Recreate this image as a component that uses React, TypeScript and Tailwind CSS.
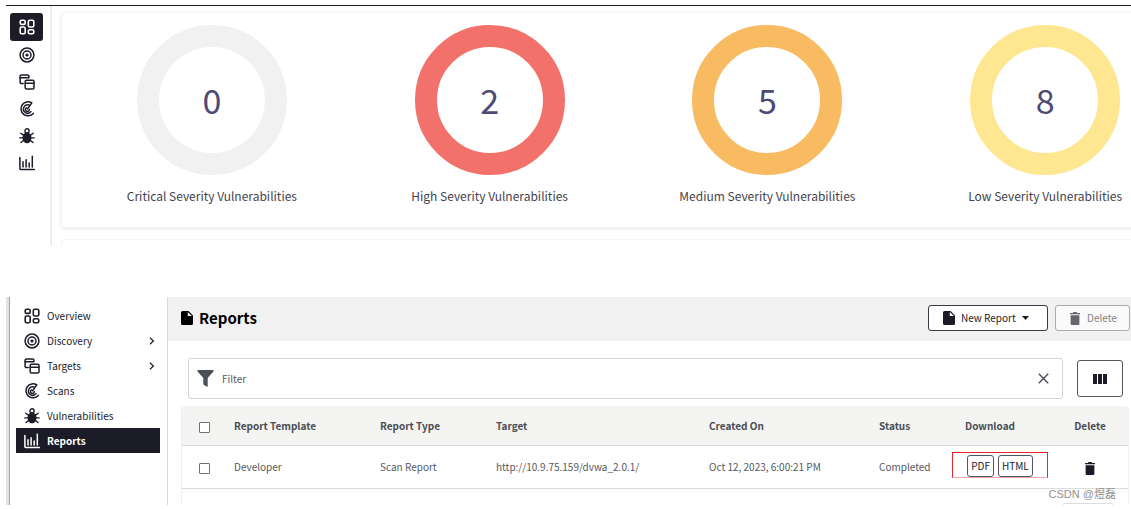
import type { ReactNode } from "react";

type IconProps = { className?: string };

function OverviewIcon({ className }: IconProps) {
  return (
    <svg viewBox="0 0 16 16" fill="none" stroke="currentColor" strokeWidth="1.6" className={className} aria-hidden="true">
      <rect x="1.2" y="1.2" width="5" height="4.2" rx="1.5" />
      <rect x="9.3" y="1.2" width="5.5" height="6.8" rx="1.5" />
      <rect x="1.2" y="8" width="5" height="6.8" rx="1.5" />
      <rect x="9.3" y="10.8" width="5.5" height="4" rx="1.5" />
    </svg>
  );
}

function DiscoveryIcon({ className }: IconProps) {
  return (
    <svg viewBox="0 0 16 16" fill="none" stroke="currentColor" strokeWidth="1.5" className={className} aria-hidden="true">
      <circle cx="8" cy="8" r="6.9" />
      <circle cx="8" cy="8" r="4" />
      <circle cx="8" cy="8" r="1.6" fill="currentColor" stroke="none" />
    </svg>
  );
}

function TargetsIcon({ className }: IconProps) {
  return (
    <svg viewBox="0 0 16 16" fill="none" stroke="currentColor" strokeWidth="1.5" strokeLinecap="round" className={className} aria-hidden="true">
      <path d="M4.2 9.6H2.4A1.3 1.3 0 0 1 1.1 8.3V2.3A1.3 1.3 0 0 1 2.4 1H8.6A1.3 1.3 0 0 1 9.9 2.3V3.6" />
      <path d="M1.1 3.8H9.6" />
      <rect x="6.2" y="6.3" width="8.8" height="8.7" rx="1.3" />
      <path d="M6.2 9.3H15" />
    </svg>
  );
}

function ScansIcon({ className }: IconProps) {
  return (
    <svg viewBox="0 0 16 16" fill="none" stroke="currentColor" strokeWidth="1.5" strokeLinecap="round" strokeLinejoin="round" className={className} aria-hidden="true">
      <path d="M14.3 12.4A7 7 0 1 1 12.8 1.9L8.6 7.8" />
      <path d="M12 10.6A4.2 4.2 0 1 1 10 4" />
      <path d="M10.3 8.4A1.9 1.9 0 1 1 7.6 6.9" />
    </svg>
  );
}

function BugIcon({ className }: IconProps) {
  return (
    <svg viewBox="0 0 16 16" fill="none" stroke="currentColor" strokeWidth="1.4" strokeLinecap="round" className={className} aria-hidden="true">
      <circle cx="8" cy="2.9" r="2.1" />
      <ellipse cx="8" cy="9.8" rx="4.5" ry="5.5" fill="currentColor" stroke="none" />
      <path d="M4.8 7.4 1.8 5.2M4.2 9.9H.8M4.8 12.2 2 14.5M11.2 7.4 14.2 5.2M11.8 9.9H15.2M11.2 12.2 14 14.5" />
    </svg>
  );
}

function ReportsIcon({ className }: IconProps) {
  return (
    <svg viewBox="0 0 16 16" fill="none" stroke="currentColor" strokeWidth="1.5" strokeLinecap="round" className={className} aria-hidden="true">
      <path d="M.9 2.5V13.4A1.2 1.2 0 0 0 2.1 14.6H15.3" />
      <path d="M4 6.8V12M7.1 4.8V12M10.2 8V12M13.3 1.2V12" />
    </svg>
  );
}

function FileIcon({ className }: IconProps) {
  return (
    <svg viewBox="0 0 12 14" fill="currentColor" className={className} aria-hidden="true">
      <path fillRule="evenodd" d="M1.5 0H7.6L12 4.4V12.5A1.5 1.5 0 0 1 10.5 14H1.5A1.5 1.5 0 0 1 0 12.5V1.5A1.5 1.5 0 0 1 1.5 0ZM6.8 1.1V5.1H10.9Z" />
    </svg>
  );
}

function TrashIcon({ className }: IconProps) {
  return (
    <svg viewBox="0 0 10 13" fill="currentColor" className={className} aria-hidden="true">
      <path d="M0 .9H2.8L3.5 0H6.5L7.2.9H10V2.3H0ZM.6 3.3H9.4V11.8A1.2 1.2 0 0 1 8.2 13H1.8A1.2 1.2 0 0 1 .6 11.8Z" />
    </svg>
  );
}

function FilterIcon({ className }: IconProps) {
  return (
    <svg viewBox="0 0 17 17" fill="currentColor" className={className} aria-hidden="true">
      <path d="M.7 0H16.3Q17 .8 16.4 1.5L10.7 8V16.4Q10.4 17 9.8 16.8L6.8 14.8Q6.3 14.4 6.3 13.9V8L.6 1.5Q0 .8.7 0Z" />
    </svg>
  );
}

function ChevronIcon({ className }: IconProps) {
  return (
    <svg viewBox="0 0 6 8" fill="none" stroke="currentColor" strokeWidth="1.2" className={className} aria-hidden="true">
      <path d="M1 .8 4.4 4 1 7.2" />
    </svg>
  );
}

const menu = [
  { label: "Overview", Icon: OverviewIcon, expandable: false },
  { label: "Discovery", Icon: DiscoveryIcon, expandable: true },
  { label: "Targets", Icon: TargetsIcon, expandable: true },
  { label: "Scans", Icon: ScansIcon, expandable: false },
  { label: "Vulnerabilities", Icon: BugIcon, expandable: false },
  { label: "Reports", Icon: ReportsIcon, expandable: false },
];

const severities = [
  { label: "Critical Severity Vulnerabilities", count: 0, ring: "border-[#f1f1f1]" },
  { label: "High Severity Vulnerabilities", count: 2, ring: "border-[#f2726b]" },
  { label: "Medium Severity Vulnerabilities", count: 5, ring: "border-[#f8bb62]" },
  { label: "Low Severity Vulnerabilities", count: 8, ring: "border-[#ffe690]" },
];

function Dashboard() {
  return (
    <section className="flex h-[241px] overflow-hidden border-t border-[#1c1b26]">
      <nav aria-label="Compact" className="flex w-[46px] shrink-0 flex-col items-start border-r-2 border-[#efefef] pt-[7px] pl-1">
        {menu.map(({ label, Icon }, i) => (
          <a
            key={label}
            href="#"
            aria-label={label}
            className={
              i === 0
                ? "flex h-7 w-[33px] items-center justify-center rounded-[3px] bg-[#1c1b28] text-white"
                : "flex h-[27px] w-[33px] items-center justify-center text-[#1c1b28]"
            }
          >
            <Icon className="size-4" />
          </a>
        ))}
      </nav>
      <div className="min-w-0 grow pt-[6px] pl-[9px]">
        <div className="-mr-[66px] grid h-[216px] grid-cols-4 rounded border border-[#f5f5f5] pt-3 pr-3 pl-[11px] shadow-[0_1px_3px_rgba(0,0,0,0.1)]">
          {severities.map(({ label, count, ring }) => (
            <div key={label} className="flex flex-col items-center">
              <div className={`flex size-[150px] items-center justify-center rounded-full border-[22px] text-[34px] leading-none text-[#4c4b75] ${ring}`}>
                {count}
              </div>
              <p className="mt-3 text-[12px] leading-[18px] whitespace-nowrap text-[#44434d]">{label}</p>
            </div>
          ))}
        </div>
        <div className="mt-[11px] -mr-[66px] h-10 rounded border border-[#f5f5f5]" />
      </div>
    </section>
  );
}

function SideMenu() {
  return (
    <nav aria-label="Main" className="w-[158px] shrink-0 border-r border-[#d9d9d9] pt-[6px] pr-[7px] pl-[6px]">
      {menu.map(({ label, Icon, expandable }) => (
        <a
          key={label}
          href="#"
          className={
            label === "Reports"
              ? "flex h-[25px] items-center bg-[#1c1b28] pr-1 pl-2 font-bold text-white"
              : "flex h-[25px] items-center pr-1 pl-2 text-[#1c1b28]"
          }
        >
          <Icon className="size-4" />
          <span className="ml-[7px] grow">{label}</span>
          {expandable && <ChevronIcon className="mr-[1px] h-2 w-[6px]" />}
        </a>
      ))}
    </nav>
  );
}

function Check({ label }: { label: string }) {
  return (
    <input
      type="checkbox"
      aria-label={label}
      className="mx-auto block size-[11px] appearance-none rounded-[1px] border border-[#6f7378] bg-white"
    />
  );
}

function DownloadButton({ children }: { children: ReactNode }) {
  return (
    <button type="button" className="h-[22px] rounded-[3px] border border-[#55545f] bg-white px-[3px] text-[#1c1b28]">
      {children}
    </button>
  );
}

function ReportTable() {
  return (
    <table className="w-full table-fixed border-collapse text-left text-[#55595f]">
      <colgroup>
        <col className="w-[52px]" />
        <col className="w-[146px]" />
        <col className="w-[116px]" />
        <col />
        <col className="w-[170px]" />
        <col className="w-[73px]" />
        <col className="w-[96px]" />
        <col className="w-[80px]" />
      </colgroup>
      <thead>
        <tr className="h-[39px] border-b border-[#dcdcdc] bg-[#f4f4f3] text-[#4a4e54]">
          <th className="pt-1 pr-[7px]"><Check label="Select all reports" /></th>
          <th className="pt-[2px]">Report Template</th>
          <th className="pt-[2px]">Report Type</th>
          <th className="pt-[2px]">Target</th>
          <th className="pt-[2px]">Created On</th>
          <th className="pt-[2px]">Status</th>
          <th className="pt-[2px] pr-5 text-center">Download</th>
          <th className="pt-[2px] pl-1 text-center">Delete</th>
        </tr>
      </thead>
      <tbody>
        <tr className="h-[43px] border-b border-[#dcdcdc]">
          <td className="pt-1 pr-[7px]"><Check label="Select Developer report" /></td>
          <td>Developer</td>
          <td>Scan Report</td>
          <td>http://10.9.75.159/dvwa_2.0.1/</td>
          <td>Oct 12, 2023, 6:00:21 PM</td>
          <td>Completed</td>
          <td className="pt-[6px] align-top">
            <div className="flex h-[26px] items-end justify-center gap-1 border border-[#e5252b] border-b-[#f6a5a8]">
              <DownloadButton>PDF</DownloadButton>
              <DownloadButton>HTML</DownloadButton>
            </div>
          </td>
          <td className="pt-1 pl-1">
            <button type="button" aria-label="Delete report" className="mx-auto block text-[#1c1b28]">
              <TrashIcon className="h-[13px] w-[10px]" />
            </button>
          </td>
        </tr>
      </tbody>
    </table>
  );
}

function Reports() {
  return (
    <section className="relative mt-[51px] flex h-[208px] overflow-hidden text-[10px] leading-4">
      <div className="w-1 shrink-0 border-r border-[#a0a3a6] bg-[#e1e4e6]" />
      <SideMenu />
      <main className="min-w-0 grow">
        <header className="flex h-[44px] items-center bg-[#f1f1f1] pr-px pb-[2px] pl-[13px]">
          <FileIcon className="h-[14px] w-3 text-black" />
          <h1 className="ml-[6px] grow text-[15px] font-bold text-black">Reports</h1>
          <button type="button" className="flex h-[26px] w-[120px] items-center rounded-[3px] border border-[#3b3a47] bg-white pl-[14px] text-[#1c1b28]">
            <FileIcon className="h-[14px] w-3" />
            <span className="ml-[6px]">New Report</span>
            <svg viewBox="0 0 7 4" fill="currentColor" className="ml-[6px] h-1 w-[7px]" aria-hidden="true">
              <path d="M0 0H7L3.5 4Z" />
            </svg>
          </button>
          <button type="button" className="ml-[7px] flex h-[26px] w-[75px] items-center rounded-[3px] border border-[#aaaaaf] bg-[#fafafa] pl-[14px] text-[#84848a]">
            <TrashIcon className="h-[13px] w-[10px] text-[#66656e]" />
            <span className="ml-[7px]">Delete</span>
          </button>
        </header>
        <div className="flex items-center pt-[17px] pr-2 pl-5">
          <div className="flex h-[41px] grow items-center rounded-[3px] border border-[#ced4da] pr-[13px] pl-2 text-[#495057]">
            <FilterIcon className="size-[17px]" />
            <input
              type="text"
              aria-label="Filter"
              placeholder="Filter"
              className="ml-2 min-w-0 grow bg-transparent outline-none placeholder:text-[#55595f]"
            />
            <button type="button" aria-label="Clear filter">
              <svg viewBox="0 0 11 11" fill="none" stroke="currentColor" strokeWidth="1.4" className="size-[11px]" aria-hidden="true">
                <path d="M.8.8 10.2 10.2M10.2.8.8 10.2" />
              </svg>
            </button>
          </div>
          <button type="button" aria-label="Columns" className="ml-[14px] flex h-[37px] w-[46px] items-center justify-center rounded-[3px] border border-[#55545f] text-[#1c1b28]">
            <svg viewBox="0 0 14 10" fill="currentColor" className="h-[10px] w-[14px]" aria-hidden="true">
              <path d="M0 0H4V10H0ZM5 0H9V10H5ZM10 0H14V10H10Z" />
            </svg>
          </button>
        </div>
        <div className="mt-[7px] mr-[2px] ml-[13px] h-[120px] overflow-hidden rounded-t border-x border-[#efefef]">
          <ReportTable />
        </div>
      </main>
      <div className="absolute right-[18px] bottom-0 h-[2px] w-[50px] rounded-t border border-b-0 border-[#dddddd]" />
      <p className="absolute right-[15px] bottom-[3px] font-['Liberation_Sans','Noto_Sans_CJK_SC',sans-serif] text-[11px] text-[#8f8f8f]">
        CSDN @煜磊
      </p>
    </section>
  );
}

export default function App() {
  return (
    <div className="bg-white pt-[5px] pl-[6px] font-['Noto_Sans_CJK_SC',sans-serif]">
      <Dashboard />
      <Reports />
    </div>
  );
}
